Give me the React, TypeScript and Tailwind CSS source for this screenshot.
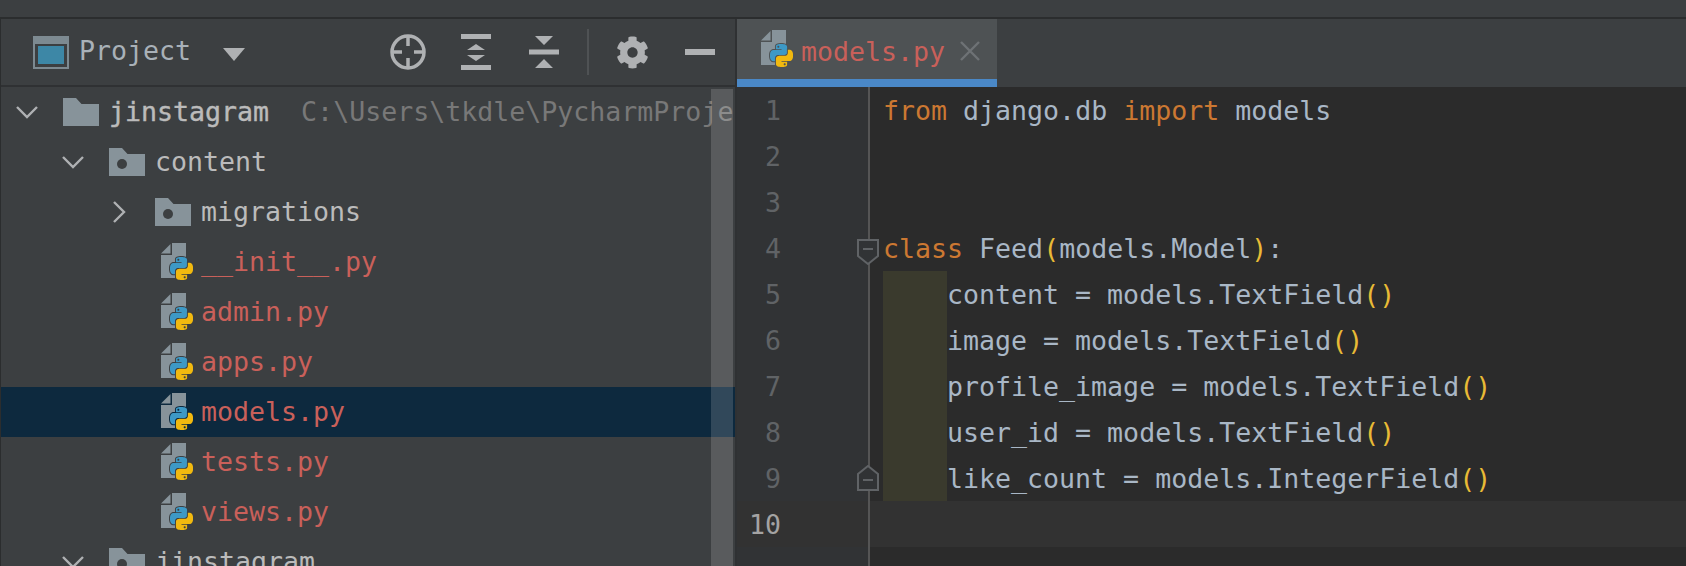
import { FaCog } from "react-icons/fa";

const MONO = "font-['DejaVu_Sans_Mono','Liberation_Mono',monospace]";

const BLUE_SNAKE =
  "M14.25.18l.9.2.73.26.59.3.45.32.34.34.25.34.16.33.1.3.04.26.02.2-.01.13V8.5l-.05.63-.13.55-.21.46-.26.38-.3.31-.33.25-.35.19-.35.14-.33.1-.3.07-.26.04-.21.02H8.77l-.69.05-.59.14-.5.22-.41.27-.33.32-.27.35-.2.36-.15.37-.1.35-.07.32-.04.27-.02.21v3.06H3.17l-.21-.03-.28-.07-.32-.12-.35-.18-.36-.26-.36-.36-.35-.46-.32-.59-.28-.73-.21-.88-.14-1.05-.05-1.23.06-1.22.16-1.04.24-.87.32-.71.36-.57.4-.44.42-.33.42-.24.4-.16.36-.1.32-.05.24-.01h.16l.06.01h8.16v-.83H6.18l-.01-2.75-.02-.37.05-.34.11-.31.17-.28.25-.26.31-.23.38-.2.44-.18.51-.15.58-.12.64-.1.71-.06.77-.04.84-.02 1.27.05zm-6.3 1.98l-.23.33-.08.41.08.41.23.34.33.22.41.09.41-.09.33-.22.23-.34.08-.41-.08-.41-.23-.33-.33-.22-.41-.09-.41.09z";
const YELLOW_SNAKE =
  "M21.04 6.11l.28.06.32.12.35.18.36.27.36.35.35.47.32.59.28.73.21.88.14 1.04.05 1.23-.06 1.23-.16 1.04-.24.86-.32.71-.36.57-.4.45-.42.33-.42.24-.4.16-.36.09-.32.05-.24.02-.16-.01h-8.22v.82h5.84l.01 2.76.02.36-.05.34-.11.31-.17.29-.25.25-.31.24-.38.2-.44.17-.51.15-.58.13-.64.09-.71.07-.77.04-.84.01-1.27-.04-1.07-.14-.9-.2-.73-.25-.59-.3-.45-.33-.34-.34-.25-.34-.16-.33-.1-.3-.04-.25-.02-.2.01-.13v-5.34l.05-.64.13-.54.21-.46.26-.38.3-.32.33-.24.35-.2.35-.14.33-.1.3-.06.26-.04.21-.02.13-.01h5.84l.69-.05.59-.14.5-.21.41-.28.33-.32.27-.35.2-.36.15-.36.1-.35.07-.32.04-.28.02-.21V6.07h2.09l.14.01zm-6.47 14.25l-.23.33-.08.41.08.41.23.33.33.23.41.08.41-.08.33-.23.23-.33.08-.41-.08-.41-.23-.33-.33-.23-.41-.08-.41.08z";

function PyIcon({ outline = "#3c3f41" }: { outline?: string }) {
  return (
    <svg width="33" height="38" viewBox="0 0 33 38" className="shrink-0">
      <path d="M1 10.500 10.500 1v9.500z" fill="#87939a" />
      <path d="M12 0h14v35H1V12h11z" fill="#87939a" />
      <g transform="translate(10 14) scale(.96)" fillRule="evenodd" strokeWidth="2" stroke={outline} style={{ paintOrder: "stroke" }}>
        <path d={BLUE_SNAKE} fill="#3d99c6" />
        <path d={YELLOW_SNAKE} fill="#f1b90f" />
      </g>
    </svg>
  );
}

function Folder({ dot = false }: { dot?: boolean }) {
  return (
    <svg width="36" height="28" viewBox="0 0 36 28" className="shrink-0">
      <path d="M0 0h13l5.500 6H36v22H0z" fill="#87939a" />
      {dot && <circle cx="13" cy="16" r="5" fill="#3c3f41" />}
    </svg>
  );
}

function Chevron({ open }: { open: boolean }) {
  return (
    <svg width="22" height="22" viewBox="0 0 22 22" fill="none" stroke="#afb1b3" strokeWidth="2.400" className="shrink-0">
      {open ? <path d="M1 6l10 10L21 6" /> : <path d="M6 1l10 10L6 21" />}
    </svg>
  );
}

function TreeRow({ pad, icon, arrow, selected, children }: { pad: string; icon: React.ReactNode; arrow?: React.ReactNode; selected?: boolean; children: React.ReactNode }) {
  return (
    <div className={`flex h-[50px] items-center whitespace-nowrap ${pad} ${selected ? "bg-[#0d293e]" : ""}`}>
      {arrow}
      {icon}
      {children}
    </div>
  );
}

function PyFile({ name, selected }: { name: string; selected?: boolean }) {
  return (
    <TreeRow pad="pl-[159px]" selected={selected} icon={<PyIcon outline={selected ? "#0d293e" : "#3c3f41"} />}>
      <span className="ml-[8px] text-[#c9605a]">{name}</span>
    </TreeRow>
  );
}

function Sidebar() {
  return (
    <div className="flex h-full w-[737px] shrink-0 flex-col border-l border-r-2 border-l-[#2b2d2e] border-r-[#2f3133] bg-[#3c3f41]">
      <div className="flex h-[68px] shrink-0 items-center border-b-2 border-[#2f3133] pl-[32px]">
        <svg width="36" height="33" viewBox="0 0 36 33" className="shrink-0">
          <rect width="36" height="33" fill="#7d8a91" />
          <rect x="2" y="8" width="32" height="23" fill="#3c3f41" />
          <rect x="5" y="10" width="26" height="18" fill="#3d87a6" />
        </svg>
        <span className="ml-[10px] -translate-y-px text-[#a9b1b8]">Project</span>
        <svg width="22" height="13" viewBox="0 0 22 13" className="ml-[32px] mt-[4px] shrink-0">
          <path d="M0 0h22L11 13z" fill="#afb1b3" />
        </svg>
        <svg width="36" height="36" viewBox="0 0 36 36" fill="none" stroke="#afb1b3" strokeWidth="3.500" className="ml-[145px] shrink-0">
          <circle cx="18" cy="18" r="16" />
          <path d="M18 2v10M18 24v10M2 18h10M24 18h10" />
        </svg>
        <svg width="30" height="36" viewBox="0 0 30 36" fill="#afb1b3" className="ml-[35px] shrink-0">
          <path d="M0 0h30v5H0zM0 31h30v5H0zM15 10l9 6H6zM6 21h18l-9 6z" />
        </svg>
        <svg width="30" height="32" viewBox="0 0 30 32" fill="#afb1b3" className="ml-[38px] shrink-0">
          <path d="M0 13.500h30v5H0zM6 0h18l-9 9zM15 23l9 9H6z" />
        </svg>
        <div className="ml-[28px] h-[46px] w-[2px] shrink-0 bg-[#4f5254]" />
        <FaCog size={33} color="#afb1b3" className="ml-[27px] shrink-0" />
        <div className="ml-[36px] h-[6px] w-[30px] shrink-0 bg-[#afb1b3]" />
      </div>
      <div className={`relative flex-1 overflow-hidden text-[26.6px] text-[#bbbbbb] ${MONO}`}>
        <TreeRow pad="pl-[15px]" arrow={<Chevron open />} icon={<span className="ml-[25px]"><Folder /></span>}>
          <span className="ml-[10px] [-webkit-text-stroke:0.4px_#bbbbbb]">jinstagram</span>
          <span className="ml-[32px] text-[#787878]">C:\Users\tkdle\PycharmProje</span>
        </TreeRow>
        <TreeRow pad="pl-[61px]" arrow={<Chevron open />} icon={<span className="ml-[25px]"><Folder dot /></span>}>
          <span className="ml-[10px]">content</span>
        </TreeRow>
        <TreeRow pad="pl-[107px]" arrow={<Chevron open={false} />} icon={<span className="ml-[25px]"><Folder dot /></span>}>
          <span className="ml-[10px]">migrations</span>
        </TreeRow>
        <PyFile name="__init__.py" />
        <PyFile name="admin.py" />
        <PyFile name="apps.py" />
        <PyFile name="models.py" selected />
        <PyFile name="tests.py" />
        <PyFile name="views.py" />
        <TreeRow pad="pl-[61px]" arrow={<Chevron open />} icon={<span className="ml-[25px]"><Folder dot /></span>}>
          <span className="ml-[10px]">jinstagram</span>
        </TreeRow>
        <div className="absolute bottom-0 right-[2px] top-[2px] w-[22px] bg-white/15" />
      </div>
    </div>
  );
}

function K({ children }: { children: React.ReactNode }) {
  return <span className="text-[#cc7832]">{children}</span>;
}
function P({ children }: { children: React.ReactNode }) {
  return <span className="text-[#e8ba36]">{children}</span>;
}

function Line({ n, current, indent, children }: { n?: number; current?: boolean; indent?: boolean; children?: React.ReactNode }) {
  return (
    <div className={`flex h-[46px] items-center whitespace-pre ${current ? "bg-[#323232]" : ""}`}>
      <div className={`flex h-full w-[131px] shrink-0 items-center justify-end pr-[87px] ${current ? "bg-[#323232] text-[#a4a3a3]" : "bg-[#313335] text-[#606366]"}`}>
        <span className="translate-y-px">{n}</span>
      </div>
      <div className="h-full w-[2px] shrink-0 bg-[#555555]" />
      <div className="flex h-full items-center pl-[13px]">
        {indent && <div className="h-full w-[64px] shrink-0 bg-[#3a3a2d]" />}
        <span className="translate-y-px">{children}</span>
      </div>
    </div>
  );
}

function FoldMark({ end }: { end?: boolean }) {
  return (
    <svg width="22" height="26" viewBox="0 0 22 26" fill="#313335" stroke="#606366" strokeWidth="2" className={`absolute left-[120px] ${end ? "top-[378px]" : "top-[152px]"}`}>
      <path d={end ? "M1 25V9L11 1l10 8v16z" : "M1 1v16l10 8 10-8V1z"} />
      <path d={end ? "M6 15h10" : "M6 10h10"} />
    </svg>
  );
}

function Editor() {
  return (
    <div className="flex h-full min-w-0 flex-1 flex-col bg-[#2b2b2b]">
      <div className="flex h-[68px] shrink-0 bg-[#3c3f41]">
        <div className="flex h-full w-[260px] flex-col">
          <div className="flex flex-1 items-center bg-[#4e5254] pl-[23px]">
            <PyIcon outline="#4e5254" />
            <span className={`ml-[8px] translate-y-[3px] text-[26.6px] text-[#c9605a] ${MONO}`}>models.py</span>
            <svg width="20" height="20" viewBox="0 0 20 20" stroke="#6e7275" strokeWidth="2.400" className="ml-[15px] mt-[3px] shrink-0">
              <path d="M1 1l18 18M19 1L1 19" />
            </svg>
          </div>
          <div className="h-[8px] shrink-0 bg-[#4a88c7]" />
        </div>
      </div>
      <div className={`relative flex-1 overflow-hidden text-[26.6px] text-[#a9b7c6] ${MONO}`}>
        <Line n={1}><K>from</K> django.db <K>import</K> models</Line>
        <Line n={2} />
        <Line n={3} />
        <Line n={4}><K>class</K> Feed<P>(</P>models.Model<P>)</P>:</Line>
        <Line n={5} indent>content = models.TextField<P>()</P></Line>
        <Line n={6} indent>image = models.TextField<P>()</P></Line>
        <Line n={7} indent>profile_image = models.TextField<P>()</P></Line>
        <Line n={8} indent>user_id = models.TextField<P>()</P></Line>
        <Line n={9} indent>like_count = models.IntegerField<P>()</P></Line>
        <Line n={10} current />
        <Line />
        <FoldMark />
        <FoldMark end />
      </div>
    </div>
  );
}

export default function App() {
  return (
    <div className="flex h-[566px] w-[1686px] flex-col overflow-hidden bg-[#3c3f41]">
      <div className="h-[19px] shrink-0 border-b-2 border-[#2b2d2e] bg-[#3c3f41]" />
      <div className={`flex min-h-0 flex-1 text-[26.6px] ${MONO}`}>
        <Sidebar />
        <Editor />
      </div>
    </div>
  );
}
